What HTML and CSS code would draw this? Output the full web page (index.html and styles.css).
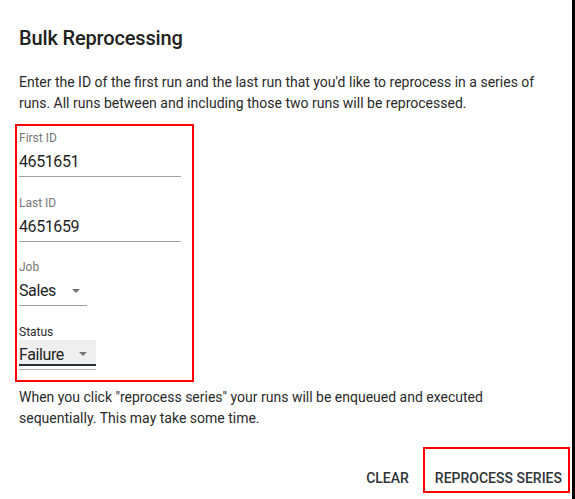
FILE: index.html
```html
<!DOCTYPE html>
<html>
<head>
<meta charset="utf-8">
<link rel="stylesheet" href="styles.css">
</head>
<body>
<div class="page">
  <div class="dialog">
    <h2 class="title">Bulk Reprocessing</h2>
    <p class="text intro">Enter the ID of the first run and the last run that you'd like to reprocess in a series of runs. All runs between and including those two runs will be reprocessed.</p>
    <div class="form-box">
      <div class="field">
        <div class="label">First ID</div>
        <div class="value">4651651</div>
        <div class="line"></div>
      </div>
      <div class="field">
        <div class="label">Last ID</div>
        <div class="value">4651659</div>
        <div class="line"></div>
      </div>
      <div class="field select job">
        <div class="label">Job</div>
        <div class="value sel-value"><span>Sales</span><span class="arrow"></span></div>
        <div class="line"></div>
      </div>
      <div class="field select status">
        <div class="label dark">Status</div>
        <div class="sel-value filled"><span>Failure</span><span class="arrow"></span></div>
        <div class="line status-line"></div>
      </div>
    </div>
    <p class="text note">When you click "reprocess series" your runs will be enqueued and executed sequentially. This may take some time.</p>
    <div class="actions">
      <button class="btn">CLEAR</button>
      <div class="btn-box"><button class="btn">REPROCESS SERIES</button></div>
    </div>
  </div>
</div>
</body>
</html>
```
FILE: styles.css
```css
html, body {
  margin: 0;
  padding: 0;
  background: #fff;
}
.page {
  width: 572px;
  height: 499px;
  border-right: 3px solid #000;
  overflow: hidden;
  font-family: Roboto, "Liberation Sans", sans-serif;
  color: #222;
}
.dialog {
  padding: 24px 0 0 19px;
}
.title {
  margin: 0;
  font-size: 20px;
  font-weight: 500;
  line-height: 28px;
  letter-spacing: -0.15px;
  color: #212121;
}
.text {
  margin: 0;
  font-size: 14px;
  line-height: 21px;
  color: #2a2a2a;
  width: 535px;
}
.intro {
  margin-top: 19.5px;
}
.form-box {
  margin: 10.5px 0 0 -4px;
  width: 173px;
  border: 2px solid #f00;
  padding: 4px 0 10px 2px;
}
.field {
  width: 162px;
  margin-bottom: 17.5px;
}
.field:last-child { margin-bottom: 0; }
.label {
  font-size: 12px;
  line-height: 16px;
  color: #777;
}
.label.dark { color: #2a2a2a; }
.value {
  font-size: 16px;
  letter-spacing: -0.4px;
  line-height: 20px;
  padding: 6px 0 4px 0;
  color: #1f1f1f;
}
.line {
  height: 1px;
  background: #a0a0a0;
}
.job { width: 68px; }
.status { width: 77px; }
.sel-value {
  display: flex;
  align-items: center;
  justify-content: space-between;
}
.job .sel-value { padding-right: 7px; }
.arrow {
  width: 0;
  height: 0;
  border-left: 4px solid transparent;
  border-right: 4px solid transparent;
  border-top: 4px solid #757575;
}
.filled {
  font-size: 16px;
  letter-spacing: -0.4px;
  line-height: 19px;
  color: #1f1f1f;
  background: #efefef;
  padding: 5px 9px 0 0;
  border-bottom: 2px solid #263238;
}
.status-line {
  margin-top: 3.5px;
  background: #b0b0b0;
}
.note {
  margin-top: 5px;
}
.actions {
  display: flex;
  justify-content: flex-end;
  align-items: flex-end;
  margin-top: 17.5px;
  gap: 14px;
  padding-right: 2px;
}
.btn {
  font-family: Roboto, "Liberation Sans", sans-serif;
  font-size: 14px;
  font-weight: 500;
  letter-spacing: 0;
  color: #2f3437;
  background: none;
  border: none;
  padding: 0;
  line-height: 20px;
}
.actions > .btn {
  margin-bottom: 5px;
}
.btn-box {
  border: 2px solid #f00;
  padding: 19px 6px 3px 10px;
}
```
